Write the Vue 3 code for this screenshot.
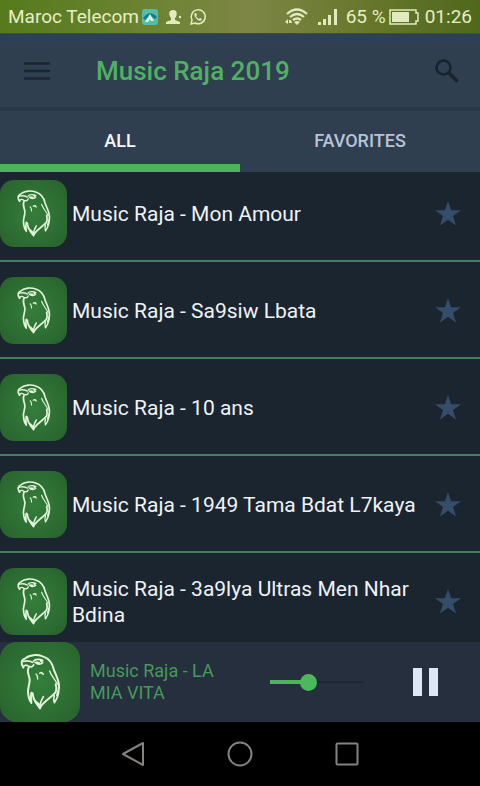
<script setup>
import { ref } from 'vue'

const tab = ref('all')
const progress = ref(39)
const playing = ref(true)
const songs = ref([
  { title: 'Music Raja - Mon Amour', favorite: false },
  { title: 'Music Raja - Sa9siw Lbata', favorite: false },
  { title: 'Music Raja - 10 ans', favorite: false },
  { title: 'Music Raja - 1949 Tama Bdat L7kaya', favorite: false },
  { title: 'Music Raja - 3a9lya Ultras Men Nhar Bdina', favorite: false }
])
</script>

<template>
  <div class="screen">
    <svg class="defs" aria-hidden="true">
      <defs>
        <radialGradient id="cover-glow" cx="50%" cy="50%" r="60%">
          <stop offset="0" stop-color="#347e3b" />
          <stop offset="1" stop-color="#2a662f" />
        </radialGradient>
      </defs>
      <symbol id="cover" viewBox="0 0 240 240">
        <rect width="240" height="240" rx="50" fill="url(#cover-glow)" />
        <g fill="none" stroke="#e2f5d8" stroke-linecap="round" stroke-linejoin="round">
          <path stroke-width="6" d="M70 76C62 64 63 53 76 49C88 38 112 37 128 43C146 49 157 62 161 81C165 95 177 112 177 133C178 142 174 150 171 160" />
          <path stroke-width="5" d="M70 76C72 68 78 68 86 73C94 76 99 74 101 68M70 58C80 55 90 57 98 61" />
          <path stroke-width="5" d="M101 57C106 51 119 51 128 55M105 61C111 69 123 67 128 62L122 57M110 61L117 62" />
          <path stroke-width="6" d="M86 77C79 90 88 100 89 113C90 126 83 137 84 150C85 163 87 174 94 183C92 170 92 162 94 152" />
          <path stroke-width="6" d="M98 154C98 174 109 185 120 199C126 181 149 171 166 152C171 143 169 134 167 127M101 171C107 180 113 184 118 188" />
          <path stroke-width="5" d="M120 199C119 185 124 174 130 164M163 161C159 172 162 177 163 182C171 170 176 158 176 146" />
          <path stroke-width="4" d="M108 96C112 99 113 104 113 111M119 94C123 90 128 91 130 97L124 93M149 87C154 103 167 114 172 127" />
        </g>
      </symbol>
    </svg>

    <div class="status">
      <span class="carrier">Maroc Telecom</span>
      <svg class="s-app" viewBox="0 0 18 18" aria-hidden="true">
        <rect x="1" y="1" width="16" height="16" rx="3" fill="#54bda9" />
        <path d="M2 10Q9 1 16 9L14 11Q9 6 4 12Z" fill="#127b91" />
        <path d="M9 6L13 13H10L9 11L7 14H4Z" fill="#e0f5df" />
      </svg>
      <svg class="s-user" viewBox="0 0 18 18" aria-hidden="true">
        <path d="M8 2C12 2 12.5 5 11 9L10 10V12L15 14V16H1V14L6 12V10C3 6 4 2 8 2Z" fill="#e2ebbd" />
        <circle cx="15" cy="9" r="1.2" fill="#e2ebbd" />
      </svg>
      <svg class="s-chat" viewBox="0 0 18 18" aria-hidden="true">
        <path d="M2 16L3 12A7 7 0 1 1 6 15Z" fill="none" stroke="#e2ebbd" stroke-width="1.5" />
        <path d="M6 5C5 6 5 8 7 10C9 13 12 14 13 11L11 10L10 11Q8 10 7 8L8 7L7 5Z" fill="#e2ebbd" />
      </svg>
      <span class="spacer"></span>
      <svg class="s-wifi" viewBox="0 0 26 20" aria-hidden="true">
        <g fill="none" stroke="#e2ebbd" stroke-width="2.2">
          <path d="M3 7Q13 -2 23 7M6 10Q13 4 20 10M9 13Q13 10 17 13" />
        </g>
        <path d="M10 15Q13 13 16 15L13 18Z" fill="#e2ebbd" />
        <path d="M1 15L4 12V17ZM5 13H7L8 16H5Z" fill="#e2ebbd" />
      </svg>
      <svg class="s-signal" viewBox="0 0 20 18" aria-hidden="true">
        <path d="M0 14H3V17H0ZM5 11H8V17H5ZM10 7H13V17H10ZM16 1H19V17H16Z" fill="#e2ebbd" />
      </svg>
      <span class="percent">65 %</span>
      <svg class="s-battery" viewBox="0 0 30 16" aria-hidden="true">
        <path d="M1 1H27V4H29V12H27V15H1Z" fill="none" stroke="#e2ebbd" stroke-width="1.5" />
        <rect x="3" y="3" width="17" height="10" fill="#e2ebbd" />
      </svg>
      <span class="clock">01:26</span>
    </div>

    <header class="toolbar">
      <button class="icon-button" aria-label="Menu">
        <svg class="i-menu" viewBox="0 0 26 18"><path d="M0 1.5H26M0 9H26M0 16.5H26" stroke="#1a2632" stroke-width="2.6" /></svg>
      </button>
      <h1>Music Raja 2019</h1>
      <button class="icon-button" aria-label="Search">
        <svg class="i-search" viewBox="0 0 24 24">
          <circle cx="8.5" cy="8.5" r="7" fill="none" stroke="#17232e" stroke-width="2.6" />
          <path d="M13.5 13.5L22.5 22.5" stroke="#17232e" stroke-width="3.2" />
        </svg>
      </button>
    </header>

    <nav class="tabs">
      <button :class="{ active: tab === 'all' }" @click="tab = 'all'">ALL</button>
      <button :class="{ active: tab === 'favorites' }" @click="tab = 'favorites'">FAVORITES</button>
    </nav>

    <ul class="songs">
      <li v-for="song in songs" :key="song.title">
        <svg class="cover" aria-hidden="true"><use href="#cover" /></svg>
        <span class="title">{{ song.title }}</span>
        <button class="star" :class="{ on: song.favorite }" aria-label="Favorite" @click="song.favorite = !song.favorite">
          <svg viewBox="0 0 26 25"><path d="M13 0L16.1 9.2H26L18 15L21 24.5L13 18.7L5 24.5L8 15L0 9.2H9.9Z" /></svg>
        </button>
      </li>
    </ul>

    <section class="player">
      <svg class="cover" aria-hidden="true"><use href="#cover" /></svg>
      <span class="now">Music Raja - LA MIA VITA</span>
      <input v-model="progress" type="range" min="0" max="100" aria-label="Position" :style="{ '--played': progress + '%' }" />
      <button class="pause" :aria-label="playing ? 'Pause' : 'Play'" @click="playing = !playing">
        <svg v-if="playing" viewBox="0 0 25 28"><path d="M0 0H9V28H0ZM16 0H25V28H16Z" fill="#dde8f4" /></svg>
        <svg v-else viewBox="0 0 25 28"><path d="M0 0L25 14L0 28Z" fill="#dde8f4" /></svg>
      </button>
    </section>

    <nav class="system">
      <button aria-label="Back"><svg viewBox="0 0 26 26"><path d="M23 2V24L3 13Z" /></svg></button>
      <button aria-label="Home"><svg viewBox="0 0 26 26"><circle cx="13" cy="13" r="11.5" /></svg></button>
      <button aria-label="Recent apps"><svg viewBox="0 0 26 26"><rect x="2.5" y="2.5" width="21" height="21" rx="1" /></svg></button>
    </nav>
  </div>
</template>

<style>
body {
  margin: 0;
  background: #000;
}
</style>

<style scoped>
.screen {
  display: flex;
  flex-direction: column;
  height: 100vh;
  background: #1b2530;
  color: #eef3f7;
  font-family: Roboto, "Liberation Sans", sans-serif;
}
button {
  display: flex;
  align-items: center;
  justify-content: center;
  padding: 0;
  border: 0;
  background: none;
  color: inherit;
  font: inherit;
}
svg {
  display: block;
  flex: none;
}
.defs {
  position: absolute;
  width: 0;
  height: 0;
}
.status {
  display: flex;
  flex: none;
  align-items: center;
  box-sizing: border-box;
  height: 34px;
  padding: 0 8px;
  background: linear-gradient(90deg, #567a1c 0%, #6f8436 35%, #7d8646 52%, #68782c 75%, #4f681c 100%);
  border-bottom: 1px solid #3c5230;
  color: #e6eec4;
  font-size: 19px;
}
.spacer {
  flex: 1;
}
.s-app,
.s-user,
.s-chat {
  width: 18px;
  height: 18px;
}
.s-app {
  margin-left: 2px;
}
.s-user,
.s-chat {
  margin-left: 6px;
}
.s-wifi {
  width: 26px;
  height: 20px;
  margin-right: 8px;
}
.s-signal {
  width: 20px;
  height: 18px;
  margin-right: 8px;
}
.s-battery {
  width: 30px;
  height: 16px;
  margin: 0 6px 0 3px;
}
.toolbar {
  display: flex;
  flex: none;
  align-items: center;
  height: 73px;
  padding: 0 8px 0 12px;
  background: linear-gradient(#2b4059, #303f50 14px);
}
.icon-button {
  width: 50px;
  height: 50px;
}
.i-menu {
  width: 26px;
  height: 18px;
}
.i-search {
  width: 24px;
  height: 24px;
}
h1 {
  flex: 1;
  margin: 0 0 0 34px;
  color: #50b063;
  font-size: 26px;
  font-weight: 500;
}
.tabs {
  display: flex;
  flex: none;
  height: 61px;
  border-top: 4px solid #293949;
  background: #303f50;
}
.tabs button {
  flex: 1;
  border-bottom: 8px solid transparent;
  padding-top: 6px;
  color: #b7c3d8;
  font-size: 18px;
  font-weight: 500;
}
.tabs .active {
  border-bottom-color: #4fb35c;
  color: #f4f8fc;
}
.songs {
  flex: 1;
  min-height: 0;
  margin: 0;
  padding: 0;
  overflow: hidden;
  list-style: none;
}
.songs li {
  display: flex;
  align-items: center;
  padding: 15px 19px 13px 0;
  border-bottom: 2px solid #437f5f;
}
.songs li:first-child {
  padding-top: 8px;
}
.songs .cover {
  width: 67px;
  height: 67px;
}
.title {
  flex: 1;
  padding-left: 5px;
  font-size: 21px;
  line-height: 26px;
}
.star svg {
  width: 26px;
  height: 25px;
  fill: #344d69;
}
.star.on svg {
  fill: #4fb35c;
}
.player {
  display: flex;
  flex: none;
  align-items: center;
  padding-right: 42px;
  background: #252f3e;
}
.player .cover {
  width: 80px;
  height: 80px;
}
.now {
  flex: 1;
  max-width: 140px;
  margin-left: 10px;
  color: #469a5b;
  font-size: 18px;
  line-height: 22px;
}
input[type="range"] {
  width: 94px;
  height: 20px;
  margin: 0 49px 0 auto;
  appearance: none;
  background:
    linear-gradient(#4fb35c, #4fb35c) left center / var(--played) 4px no-repeat,
    linear-gradient(#1b2733, #1b2733) center / 100% 2px no-repeat;
}
input[type="range"]::-webkit-slider-thumb {
  width: 17px;
  height: 17px;
  border-radius: 50%;
  appearance: none;
  background: #4cb75c;
}
.pause svg {
  width: 25px;
  height: 28px;
}
.system {
  display: flex;
  flex: none;
  justify-content: center;
  gap: 81px;
  height: 64px;
  background: #000;
}
.system svg {
  width: 26px;
  height: 26px;
  fill: none;
  stroke: #85817f;
  stroke-width: 2;
  stroke-linejoin: round;
}
</style>
